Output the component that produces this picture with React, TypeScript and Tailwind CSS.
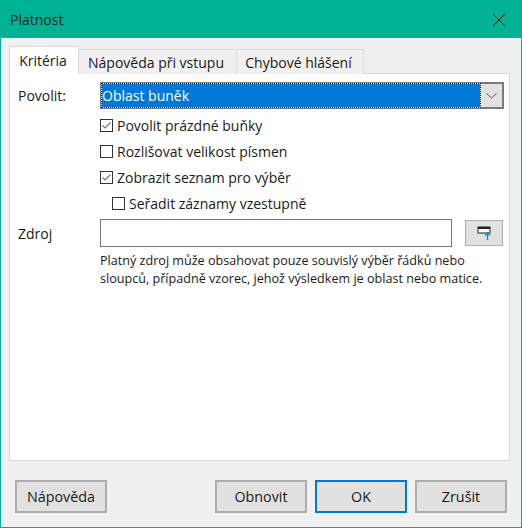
import React from 'react';

const font = "[font-family:'Open_Sans','Noto_Sans',sans-serif]";

const tabs = ['Kritéria', 'Nápověda při vstupu', 'Chybové hlášení'];

const CheckRow = ({ label, checked, indent }: { label: string; checked?: boolean; indent?: boolean }) => (
  <div className={`flex h-[26px] items-center gap-[4px] ${indent ? 'pl-[12px]' : ''}`}>
    <span className="flex h-[13px] w-[13px] items-center justify-center border border-[#333] bg-white">
      {checked && (
        <svg width="11" height="11" viewBox="0 0 11 11" fill="none">
          <path d="M1.5 5.5 L4.2 8 L9.5 2.5" stroke="#777" strokeWidth="1.2" />
        </svg>
      )}
    </span>
    <span>{label}</span>
  </div>
);

const Btn = ({ label, def }: { label: string; def?: boolean }) => (
  <button
    className={`h-[33px] w-[92px] bg-[#e1e1e1] text-[14.3px] text-[#1a1a1a] ${
      def ? 'border-2 border-[#0078d7]' : 'border-2 border-[#adadad]'
    }`}
  >
    {label}
  </button>
);

export default function App() {
  return (
    <div className={`flex h-[528px] w-[522px] flex-col border border-[#00b294] bg-[#f0f0f0] text-[14px] text-[#1a1a1a] ${font}`}>
      {/* title bar */}
      <div className="flex h-[37px] shrink-0 items-center justify-between bg-[#00b294] pl-[9px] pr-[15px] text-[#0a2a24]">
        <span>Platnost</span>
        <svg width="14" height="14" viewBox="0 0 14 14" fill="none">
          <path d="M1 1 L13 13 M13 1 L1 13" stroke="#111" strokeWidth="1" />
        </svg>
      </div>

      <div className="flex flex-1 flex-col pl-[8px] pr-[11px] pt-[8px]">
        {/* tabs */}
        <div className="relative z-10 flex h-[28px] items-end">
          {tabs.map((t, i) => (
            <div
              key={t}
              className={
                i === 0
                  ? 'flex h-[28px] w-[70px] items-center justify-center border border-b-0 border-[#d9d9d9] bg-white pr-[2px]'
                  : 'flex h-[25px] items-center justify-center border border-b-0 border-l-0 border-[#d9d9d9] bg-[#f0f0f0] pr-[3px] ' +
                    (i === 1 ? 'w-[158px]' : 'w-[127px]')
              }
            >
              {t}
            </div>
          ))}
        </div>

        {/* panel */}
        <div className="-mt-px h-[388px] border border-[#d9d9d9] bg-white pl-[8px] pr-[5px] pt-[8px]">
          <div className="grid grid-cols-[82px_1fr] items-center">
            <span>Povolit:</span>
            <div className="flex h-[27px] border border-[#7a7a7a] bg-white">
              <div className="flex flex-1 items-center border border-dotted border-black bg-[#0078d7] bg-clip-padding text-white">
                Oblast buněk
              </div>
              <div className="flex w-[22px] items-center justify-center border-y border-r border-[#7a7a7a] bg-[#e1e1e1]">
                <svg width="11" height="6" viewBox="0 0 11 6" fill="none">
                  <path d="M0.5 0.5 L5.5 5 L10.5 0.5" stroke="#555" strokeWidth="1" />
                </svg>
              </div>
            </div>
          </div>

          <div className="ml-[82px] mt-[3px]">
            <CheckRow label="Povolit prázdné buňky" checked />
            <CheckRow label="Rozlišovat velikost písmen" />
            <CheckRow label="Zobrazit seznam pro výběr" checked />
            <CheckRow label="Seřadit záznamy vzestupně" indent />
          </div>

          <div className="mt-[3px] grid grid-cols-[82px_1fr] items-center">
            <span>Zdroj</span>
            <div className="flex items-center justify-between">
              <div className="h-[28px] w-[352px] border border-[#7a7a7a] bg-white" />
              <button className="mr-px flex h-[26px] w-[38px] items-center justify-center border border-[#adadad] bg-[#e1e1e1]">
                <svg width="14" height="14" viewBox="0 0 14 14" fill="none">
                  <rect x="1" y="1" width="12" height="6" fill="#fff" stroke="#222" strokeWidth="1" />
                  <rect x="1" y="1" width="12" height="2" fill="#222" />
                  <path d="M10.5 14 V7 M8 9.5 L10.5 7 L13 9.5" stroke="#0090e8" strokeWidth="1.3" />
                </svg>
              </button>
            </div>
          </div>

          <p className="ml-[82px] mt-[5px] text-[12.6px] leading-[18px]">
            Platný zdroj může obsahovat pouze souvislý výběr řádků nebo
            <br />
            sloupců, případně vzorec, jehož výsledkem je oblast nebo matice.
          </p>
        </div>

        {/* buttons */}
        <div className="mt-[19px] flex gap-[8px] pl-[6px] pr-[3px]">
          <Btn label="Nápověda" />
          <div className="flex-1" />
          <Btn label="Obnovit" />
          <Btn label="OK" def />
          <Btn label="Zrušit" />
        </div>
      </div>
    </div>
  );
}
